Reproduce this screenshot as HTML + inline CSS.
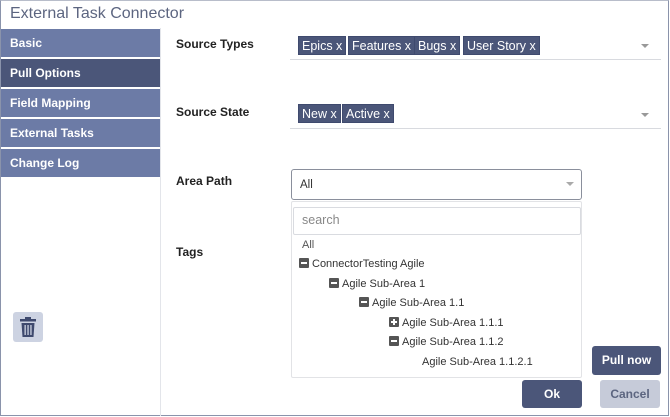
<!DOCTYPE html>
<html><head><style>
*{margin:0;padding:0;box-sizing:border-box}
body{width:670px;height:417px;position:relative;background:#fff;font-family:"Liberation Sans",Arial,sans-serif;overflow:hidden}
.a{position:absolute}
.frame{left:0;top:0;width:669px;height:416px;border:1px solid #8a93ab;border-top-color:#b8bdca}
.title{left:10px;top:5px;font-size:16px;color:#5c6580}
.nav{left:1px;width:159px;height:28px;background:#6c7ba6;color:#fff;font-weight:bold;font-size:12px;line-height:28px;padding-left:9px}
.nav.act{background:#4b5679}
.div{left:160px;top:28px;width:1px;height:388px;background:#e3e5ea}
.lbl{font-size:12px;font-weight:bold;color:#222}
.chip{height:19px;background:#4b5679;color:#fff;font-size:12.5px;line-height:19px;padding:0 3px;border:1px solid #3f4a6e}
.line{height:1px;background:#d8dadf}
.arr{width:0;height:0;border-left:4px solid transparent;border-right:4px solid transparent;border-top:4px solid #999}
.it{font-size:11px;color:#333;line-height:14px;white-space:nowrap}
.ic{display:inline-block;width:10px;height:10px;background:#555;border-radius:1px;vertical-align:-1px;margin-right:3px;position:relative}
.ic:after{content:"";position:absolute;left:2px;top:4px;width:6px;height:2px;background:#fff}
.ic.p:before{content:"";position:absolute;left:4px;top:2px;width:2px;height:6px;background:#fff}
.btn{background:#4b5679;color:#fff;font-weight:bold;font-size:12px;text-align:center;border-radius:3px}
</style></head><body>
<div class="a frame"></div>
<div class="a title">External Task Connector</div>
<div class="a nav" style="top:29px">Basic</div>
<div class="a nav act" style="top:59px">Pull Options</div>
<div class="a nav" style="top:89px">Field Mapping</div>
<div class="a nav" style="top:119px">External Tasks</div>
<div class="a nav" style="top:149px">Change Log</div>
<div class="a div"></div>
<div class="a" style="left:13px;top:312px;width:30px;height:30px;background:#cdd3e2;border-radius:3px"></div>
<svg class="a" style="left:18px;top:316px" width="20" height="22" viewBox="0 0 20 22"><rect x="2" y="3" width="16" height="2.5" fill="#3f4a6e"/><rect x="7" y="1" width="6" height="2.5" fill="#3f4a6e"/><path d="M3.5 7h13l-1 14h-11z" fill="#3f4a6e"/><rect x="6.5" y="9" width="1.3" height="10" fill="#cdd3e2"/><rect x="9.4" y="9" width="1.3" height="10" fill="#cdd3e2"/><rect x="12.3" y="9" width="1.3" height="10" fill="#cdd3e2"/></svg>

<div class="a lbl" style="left:176px;top:37px">Source Types</div>
<div class="a lbl" style="left:176px;top:105px">Source State</div>
<div class="a lbl" style="left:176px;top:174px">Area Path</div>
<div class="a lbl" style="left:176px;top:245px">Tags</div>

<div class="a chip" style="left:298px;top:36px">Epics x</div>
<div class="a chip" style="left:348px;top:36px">Features x</div>
<div class="a chip" style="left:414px;top:36px">Bugs x</div>
<div class="a chip" style="left:463px;top:36px">User Story x</div>
<div class="a line" style="left:290px;top:59px;width:371px"></div>
<div class="a arr" style="left:641px;top:44px"></div>

<div class="a chip" style="left:298px;top:104px">New x</div>
<div class="a chip" style="left:342px;top:104px">Active x</div>
<div class="a line" style="left:290px;top:128px;width:371px"></div>
<div class="a arr" style="left:641px;top:113px"></div>

<div class="a" style="left:291px;top:169px;width:291px;height:31px;border:1px solid #8a8f9c;border-radius:3px"></div>
<div class="a it" style="left:300px;top:178px;font-size:11.5px">All</div>
<div class="a arr" style="left:566px;top:182px;border-top-color:#aaa"></div>
<div class="a" style="left:291px;top:201px;width:291px;height:177px;border:1px solid #e2e3e6;border-radius:2px"></div>
<div class="a" style="left:293px;top:207px;width:288px;height:28px;border:1px solid #d9dbe0;border-radius:2px"></div>
<div class="a" style="left:302px;top:213px;font-size:12.5px;color:#888">search</div>
<div class="a it" style="left:302px;top:238px;color:#555">All</div>
<div class="a it" style="left:299px;top:257px"><span class="ic"></span>ConnectorTesting Agile</div>
<div class="a it" style="left:329px;top:277px"><span class="ic"></span>Agile Sub-Area 1</div>
<div class="a it" style="left:359px;top:296px"><span class="ic"></span>Agile Sub-Area 1.1</div>
<div class="a it" style="left:389px;top:316px"><span class="ic p"></span>Agile Sub-Area 1.1.1</div>
<div class="a it" style="left:389px;top:335px"><span class="ic"></span>Agile Sub-Area 1.1.2</div>
<div class="a it" style="left:422px;top:355px">Agile Sub-Area 1.1.2.1</div>

<div class="a btn" style="left:592px;top:346px;width:69px;height:29px;line-height:29px">Pull now</div>
<div class="a btn" style="left:522px;top:380px;width:60px;height:28px;line-height:28px">Ok</div>
<div class="a btn" style="left:600px;top:380px;width:60px;height:28px;line-height:28px;background:#c6cbd9;color:#5c6580">Cancel</div>
</body></html>
